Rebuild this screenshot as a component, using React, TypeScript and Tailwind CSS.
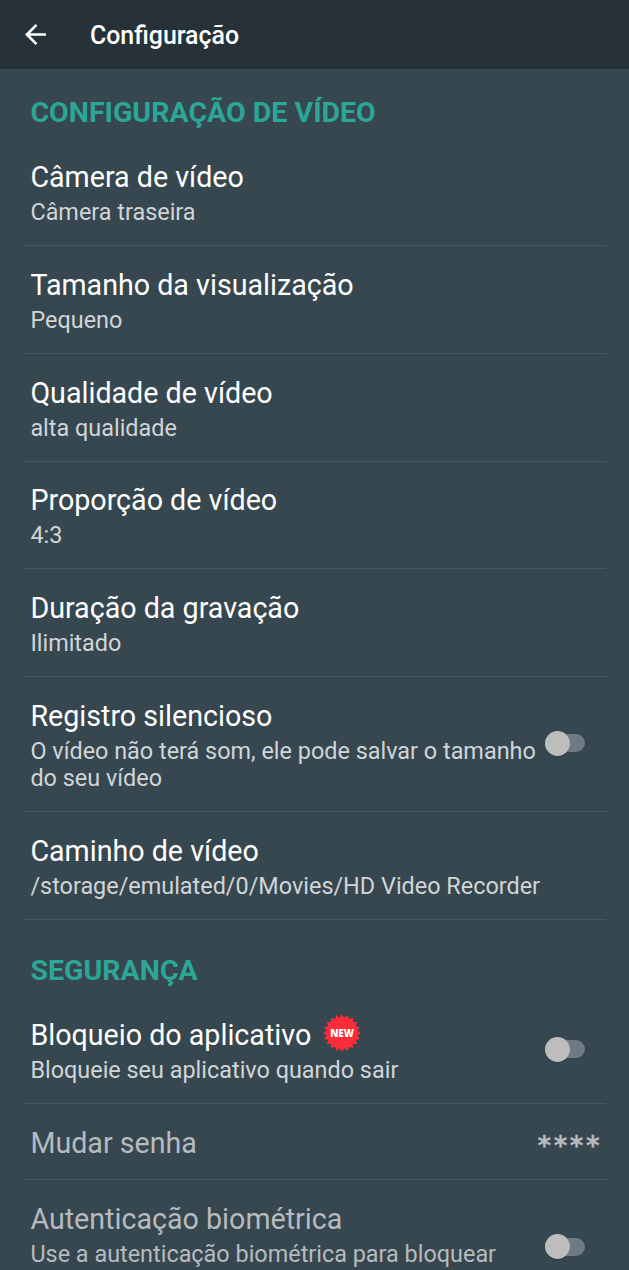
import React, { useState } from 'react';

interface SettingItem {
  id: string;
  title: string;
  summary?: string;
  toggle?: boolean;
  isNew?: boolean;
  value?: string;
  disabled?: boolean;
  tall?: boolean;
}

const videoSettings: SettingItem[] = [
  { id: 'camera', title: 'Câmera de vídeo', summary: 'Câmera traseira' },
  { id: 'preview', title: 'Tamanho da visualização', summary: 'Pequeno' },
  { id: 'quality', title: 'Qualidade de vídeo', summary: 'alta qualidade' },
  { id: 'ratio', title: 'Proporção de vídeo', summary: '4:3' },
  { id: 'duration', title: 'Duração da gravação', summary: 'Ilimitado' },
  {
    id: 'silent',
    title: 'Registro silencioso',
    summary: 'O vídeo não terá som, ele pode salvar o tamanho do seu vídeo',
    toggle: true
  },
  { id: 'path', title: 'Caminho de vídeo', summary: '/storage/emulated/0/Movies/HD Video Recorder' }
];

const securitySettings: SettingItem[] = [
  {
    id: 'lock',
    title: 'Bloqueio do aplicativo',
    summary: 'Bloqueie seu aplicativo quando sair',
    toggle: true,
    isNew: true
  },
  { id: 'password', title: 'Mudar senha', value: '****', disabled: true },
  {
    id: 'biometric',
    title: 'Autenticação biométrica',
    summary: 'Use a autenticação biométrica para bloquear',
    toggle: true,
    disabled: true,
    tall: true
  }
];

// 20 pointed star used behind the NEW label
const burstPoints = Array.from({ length: 40 }, (_, i) => {
  const radius = i % 2 === 0 ? 18.8 : 15.4;
  const angle = (Math.PI * i) / 20 - Math.PI / 2;
  return `${(19 + radius * Math.cos(angle)).toFixed(2)},${(19 + radius * Math.sin(angle)).toFixed(2)}`;
}).join(' ');

function NewBadge() {
  return (
    <svg width="38" height="38" viewBox="0 0 38 38" className="-mt-3 -mb-2 ml-[11.5px] shrink-0">
      <polygon points={burstPoints} fill="#fb2c3a" />
      <text
        x="19"
        y="22.6"
        textAnchor="middle"
        fill="#fff"
        fontSize="9.8"
        fontWeight="800"
        fontFamily="Open Sans, sans-serif"
      >
        NEW
      </text>
    </svg>
  );
}

function Toggle({ label }: { label: string }) {
  const [checked, setChecked] = useState(false);

  return (
    <button
      type="button"
      role="switch"
      aria-checked={checked}
      aria-label={label}
      onClick={() => setChecked(!checked)}
      className="flex h-[26px] w-10 shrink-0 items-center"
    >
      <span className={`flex h-[18px] w-10 items-center rounded-full bg-[#6d7b83] ${checked ? 'justify-end' : ''}`}>
        <span className="size-[25px] shrink-0 rounded-full bg-[#bdbdbd] shadow-[0_1px_1px_rgba(0,0,0,0.2)]" />
      </span>
    </button>
  );
}

function SettingRow({ item }: { item: SettingItem }) {
  return (
    <div className="mx-[23px] flex min-h-[75.8px] items-center border-b border-[#465963] pt-[21.7px] pb-[18.5px] pl-[7.4px]">
      <div className={`min-w-0 flex-1 ${item.disabled ? 'text-[#b6bbbf]' : 'text-white'}`}>
        <div className="flex items-center text-[28.65px] leading-[34px]">
          {item.title}
          {item.isNew && <NewBadge />}
        </div>
        {item.summary && (
          <div
            className={`mt-[5px] text-[23.42px] leading-[27.5px] ${item.disabled ? '' : 'text-[#d0d5d8]'} ${item.tall ? 'min-h-[55px]' : ''}`}
          >
            {item.summary}
          </div>
        )}
      </div>
      {item.value && (
        <span className="mt-[3px] mr-[4px] -mb-[3px] font-['DejaVu_Sans',sans-serif] text-[26px] leading-[34px] font-bold tracking-[2.5px] text-[#b6bbbf] [-webkit-text-stroke:0.3px_#b6bbbf]">
          {item.value}
        </span>
      )}
      {item.toggle && (
        <div className="mr-[21px] mb-[4.6px] ml-[3px] flex">
          <Toggle label={item.title} />
        </div>
      )}
    </div>
  );
}

function SectionTitle({ children }: { children: React.ReactNode }) {
  return <h2 className="pl-[30.4px] text-[28.55px] leading-[34px] font-bold text-[#2ba697]">{children}</h2>;
}

export default function App() {
  return (
    <div className="flex h-[1270px] w-[629px] flex-col overflow-hidden bg-[#37474f] font-['Roboto',sans-serif]">
      <header className="flex h-[69px] shrink-0 items-center bg-[#263238] pl-[25px]">
        <button type="button" aria-label="Voltar" className="shrink-0">
          <svg width="21" height="21" viewBox="4 4 16 16" fill="#fff">
            <path d="M20 11H7.83l5.59-5.59L12 4l-8 8 8 8 1.41-1.41L7.83 13H20v-2z" />
          </svg>
        </button>
        <h1 className="ml-[44px] pt-[2px] text-[24.9px] leading-[30px] font-medium text-white">Configuração</h1>
      </header>

      <main className="pt-[26.6px]">
        <SectionTitle>CONFIGURAÇÃO DE VÍDEO</SectionTitle>
        <div className="mt-[8.9px]">
          {videoSettings.map((item) => (
            <SettingRow key={item.id} item={item} />
          ))}
        </div>

        <div className="pt-[34px]">
          <SectionTitle>SEGURANÇA</SectionTitle>
        </div>
        <div className="mt-[8.9px]">
          {securitySettings.map((item) => (
            <SettingRow key={item.id} item={item} />
          ))}
        </div>
      </main>
    </div>
  );
}
